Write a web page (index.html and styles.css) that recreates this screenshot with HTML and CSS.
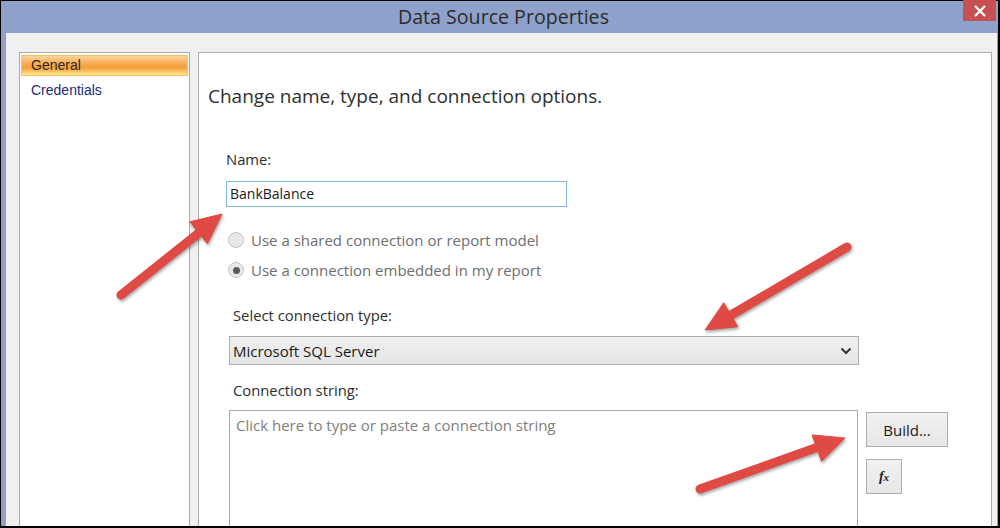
FILE: index.html
```html
<!DOCTYPE html>
<html>
<head>
<meta charset="utf-8">
<link rel="stylesheet" href="styles.css">
</head>
<body>
<div class="screen">
  <div class="window">
    <div class="titlebar">
      <span class="title">Data Source Properties</span>
      <div class="close">
        <svg width="14" height="12" viewBox="0 0 14 12"><path d="M2 1 L12 11 M12 1 L2 11" stroke="#fff" stroke-width="2.2" fill="none"/></svg>
      </div>
    </div>
    <div class="client">
      <div class="nav">
        <div class="nav-item selected">General</div>
        <div class="nav-item">Credentials</div>
      </div>
      <div class="panel">
        <div class="heading">Change name, type, and connection options.</div>
        <div class="form">
          <div class="label name-label">Name:</div>
          <div class="textbox">BankBalance</div>
          <div class="radio radio-1"><span class="circle"></span><span>Use a shared connection or report model</span></div>
          <div class="radio radio-2"><span class="circle checked"></span><span>Use a connection embedded in my report</span></div>
          <div class="label sel-label">Select connection type:</div>
          <div class="select">
            <span>Microsoft SQL Server</span>
            <svg width="12" height="8" viewBox="0 0 12 8"><path d="M1.5 1.5 L6 6 L10.5 1.5" stroke="#333" stroke-width="2" fill="none"/></svg>
          </div>
          <div class="label conn-label">Connection string:</div>
          <div class="conn-row">
            <div class="textarea">Click here to type or paste a connection string</div>
            <div class="buttons">
              <div class="btn build">Build...</div>
              <div class="btn fx"><i>f</i><sub>x</sub></div>
            </div>
          </div>
        </div>
      </div>
    </div>
  </div>
  <svg class="arrows" width="1000" height="528" viewBox="0 0 1000 528">
    <g fill="#E04A44" stroke="#E04A44">
      <line x1="121" y1="295" x2="200" y2="232" stroke-width="9" stroke-linecap="round"/>
      <polygon points="222,214 207.4,243.7 189.9,221.8" stroke-width="1" stroke-linejoin="round"/>
      <line x1="847" y1="247" x2="731" y2="315" stroke-width="9" stroke-linecap="round"/>
      <polygon points="705,330 737.9,326.7 723.7,302.7" stroke-width="1" stroke-linejoin="round"/>
      <line x1="700" y1="489" x2="818" y2="447" stroke-width="9" stroke-linecap="round"/>
      <polygon points="845,438 821.5,461.3 812.1,434.9" stroke-width="1" stroke-linejoin="round"/>
    </g>
  </svg>
</div>
</body>
</html>
```
FILE: styles.css
```css
html, body {
  margin: 0;
  padding: 0;
}
body {
  width: 1000px;
  height: 528px;
  overflow: hidden;
  font-family: "Open Sans", "Noto Sans", sans-serif;
}
.screen {
  position: relative;
  width: 1000px;
  height: 528px;
  box-sizing: border-box;
  background: #000;
  padding: 1px 2px 2px 1px;
}
.window {
  height: 100%;
  display: flex;
  flex-direction: column;
  background: #8EA1CB;
  padding-left: 5px;
  padding-right: 1px;
  box-sizing: border-box;
}
.titlebar {
  position: relative;
  height: 32px;
  flex: none;
  display: flex;
  align-items: center;
  justify-content: center;
}
.title {
  font-size: 19.6px;
  color: #2b2b2b;
  margin-left: 4px;
  margin-top: -2px;
}
.close {
  position: absolute;
  top: -1px;
  right: 1px;
  width: 33px;
  height: 21px;
  background: #C75050;
  display: flex;
  align-items: center;
  justify-content: center;
}
.client {
  flex: 1;
  display: flex;
  gap: 8px;
  background: #F0F0F0;
  padding: 19px 5px 0 13px;
  min-height: 0;
}
.nav {
  width: 167px;
  flex: none;
  background: #fff;
  border: 1px solid #A9A9A9;
  border-bottom: none;
  padding: 2px 1px 0 1px;
  box-sizing: content-box;
}
.nav-item {
  height: 21px;
  line-height: 21px;
  padding-left: 10px;
  font-family: "Liberation Sans", Arial, sans-serif;
  font-size: 14px;
  color: #1E2B7B;
}
.nav-item.selected {
  color: #2a2a2a;
  background: linear-gradient(#FCD5A0 0%, #F9B059 35%, #F69E3A 60%, #FAC466 82%, #FFE79A 100%);
  border: 1px solid #F3C25E;
  height: 19px;
  line-height: 19px;
  padding-left: 9px;
  margin-bottom: 4px;
}
.panel {
  flex: 1;
  background: #fff;
  border: 1px solid #ABABAB;
  border-bottom: none;
  display: flex;
  flex-direction: column;
  min-height: 0;
}
.heading {
  margin: 30px 0 0 9px;
  height: 26px;
  line-height: 26px;
  font-size: 19px;
  color: #2e2e2e;
}
.form {
  flex: 1;
  display: flex;
  flex-direction: column;
  padding-left: 27px;
  min-height: 0;
}
.label {
  height: 20px;
  line-height: 20px;
  font-size: 14.8px;
  color: #2e2e2e;
}
.name-label { margin-top: 40px; }
.textbox {
  margin-top: 12px;
  width: 336px;
  height: 24px;
  line-height: 24px;
  border: 1px solid #7EB4EA;
  padding-left: 3px;
  font-size: 14px;
  color: #1a1a1a;
  box-sizing: content-box;
}
.radio {
  display: flex;
  align-items: center;
  height: 20px;
  margin-left: 2px;
  font-size: 15px;
  color: #6E6E6E;
  gap: 7px;
}
.radio-1 { margin-top: 23px; }
.radio-2 { margin-top: 10px; }
.circle {
  width: 14px;
  height: 14px;
  border-radius: 50%;
  border: 1px solid #C5C5C5;
  background: #E8E8E8;
  display: flex;
  align-items: center;
  justify-content: center;
  flex: none;
}
.circle.checked::after {
  content: "";
  width: 7px;
  height: 7px;
  border-radius: 50%;
  background: #5A5A5A;
}
.sel-label { margin: 25px 0 0 7px; }
.select {
  margin: 11px 0 0 3px;
  width: 619px;
  height: 27px;
  border: 1px solid #ACACAC;
  background: linear-gradient(#F0F0F0, #E5E5E5);
  display: flex;
  align-items: center;
  justify-content: space-between;
  padding: 0 6px 0 3px;
  box-sizing: content-box;
  font-size: 15px;
  color: #1a1a1a;
}
.select span { flex: 1; }
.conn-label { margin: 15px 0 0 7px; }
.conn-row {
  margin: 10px 0 0 3px;
  display: flex;
  gap: 8px;
  flex: 1;
  min-height: 0;
}
.textarea {
  width: 621px;
  flex: none;
  border: 1px solid #ABABAB;
  border-bottom: none;
  padding: 4px 0 0 6px;
  font-size: 15px;
  color: #808080;
  line-height: 20px;
}
.buttons {
  display: flex;
  flex-direction: column;
  align-items: flex-start;
  gap: 12px;
  padding-top: 2px;
}
.btn {
  height: 33px;
  border: 1px solid #ADADAD;
  background: linear-gradient(#F2F2F2, #E6E6E6);
  display: flex;
  align-items: center;
  justify-content: center;
  font-size: 15px;
  color: #1a1a1a;
}
.build { width: 80px; }
.fx {
  width: 34px;
  font-family: "Liberation Serif", serif;
  font-weight: bold;
  font-size: 14px;
}
.fx sub {
  font-size: 11px;
  vertical-align: -1px;
  font-style: italic;
}
.arrows {
  position: absolute;
  left: 0;
  top: 0;
  pointer-events: none;
  filter: drop-shadow(1px 2px 1.5px rgba(0,0,0,0.35));
}
```
